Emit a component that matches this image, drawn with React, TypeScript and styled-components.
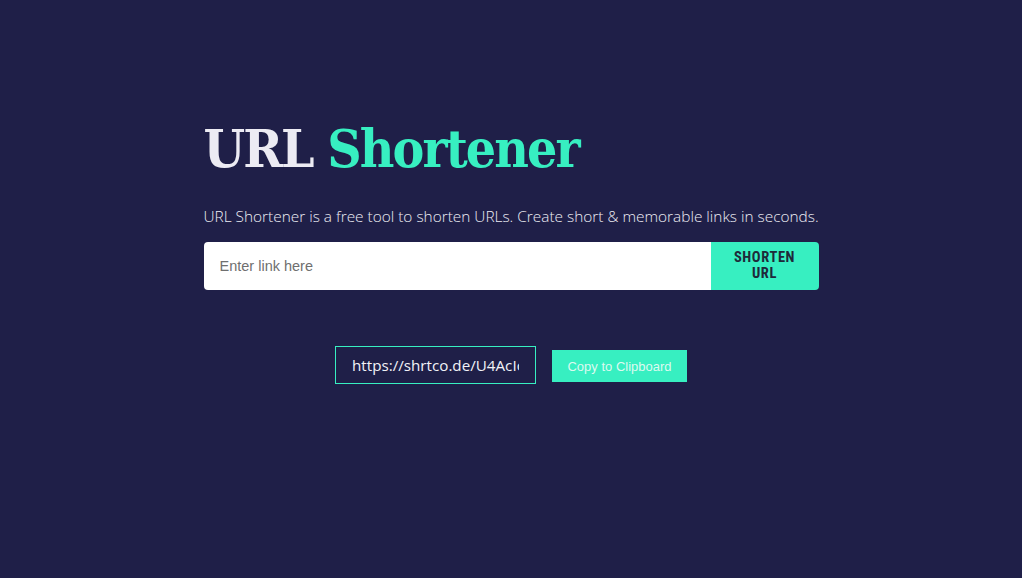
import React from "react";
import styled, { createGlobalStyle } from "styled-components";

const Global = createGlobalStyle`
  html, body { margin: 0; padding: 0; background: #1f1f48; }
  body { font-family: "Open Sans", sans-serif; }
`;

const Page = styled.main`
  width: 1022px;
  height: 578px;
  background: #1f1f48;
  display: flex;
  flex-direction: column;
  align-items: center;
  box-sizing: border-box;
  padding-top: 112px;
`;

const Section = styled.section`
  width: 615px;
  display: flex;
  flex-direction: column;
`;

const Title = styled.h1`
  margin: 0;
  font-family: "DejaVu Serif Condensed", "DejaVu Serif", serif;
  font-weight: 700;
  font-size: 53px;
  line-height: 72px;
  letter-spacing: -1.9px;
  color: #ecebf3;
`;

const Accent = styled.span`
  color: #37efc1;
`;

const Lead = styled.p`
  margin: 19px 0 0;
  font-family: "Open Sans", sans-serif;
  font-weight: 300;
  font-size: 15.4px;
  line-height: 28px;
  color: #eeeef5;
  white-space: nowrap;
`;

const Form = styled.form`
  display: flex;
  margin-top: 11px;
  height: 48px;
`;

const Input = styled.input`
  flex: 1;
  border: none;
  outline: none;
  border-radius: 4px 0 0 4px;
  background: #fff;
  padding: 0 16px;
  font-family: "Liberation Sans", Arial, sans-serif;
  font-size: 14.5px;
  color: #333;
  &::placeholder { color: #6f6f6f; }
`;

const ShortenButton = styled.button`
  width: 108px;
  border: none;
  border-radius: 0 4px 4px 0;
  background: #37efc1;
  color: #1e2a3a;
  font-family: "Roboto Condensed", "Liberation Sans Narrow", "Liberation Sans", sans-serif;
  font-weight: 700;
  font-size: 14.5px;
  line-height: 16px;
  letter-spacing: 0.6px;
  padding: 0 8px;
`;

const ResultRow = styled.div`
  display: flex;
  align-items: center;
  gap: 16px;
  margin-top: 56px;
`;

const ResultField = styled.input`
  width: 201px;
  height: 38px;
  box-sizing: border-box;
  border: 1px solid #37efc1;
  border-radius: 0;
  background: transparent;
  outline: none;
  padding: 0 16px;
  font-family: "Open Sans", sans-serif;
  font-size: 15.2px;
  color: #f2f2f7;
`;

const CopyButton = styled.button`
  width: 135px;
  height: 32px;
  margin-top: 2px;
  border: none;
  background: #37efc1;
  color: #dcfaf0;
  font-family: "Liberation Sans", Arial, sans-serif;
  font-size: 13px;
  padding: 0;
`;

export default function App() {
  return (
    <>
      <Global />
      <Page>
        <Section>
          <Title>
            URL <Accent>Shortener</Accent>
          </Title>
          <Lead>
            URL Shortener is a free tool to shorten URLs. Create short &amp; memorable links in seconds.
          </Lead>
          <Form onSubmit={(e) => e.preventDefault()}>
            <Input placeholder="Enter link here" />
            <ShortenButton type="submit">
              SHORTEN
              <br />
              URL
            </ShortenButton>
          </Form>
        </Section>
        <ResultRow>
          <ResultField readOnly value="https://shrtco.de/U4AcIc" />
          <CopyButton>Copy to Clipboard</CopyButton>
        </ResultRow>
      </Page>
    </>
  );
}
